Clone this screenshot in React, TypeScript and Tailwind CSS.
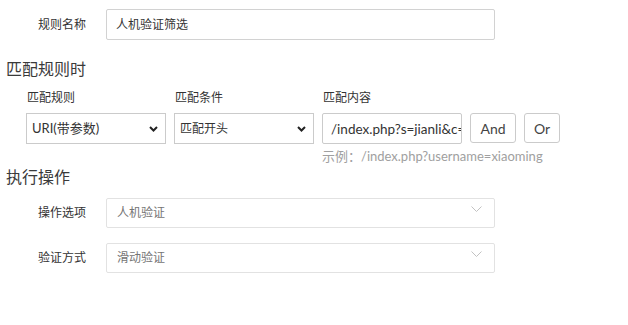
export default function App() {
  const font = { fontFamily: 'Lato, "Noto Sans CJK SC", sans-serif' };
  return (
    <div className="w-[628px] h-[325px] bg-white text-[#333]" style={font}>
      {/* 规则名称 */}
      <div className="flex items-center pt-[9px]">
        <div className="w-[86px] text-right text-[12px] text-[#333]">规则名称</div>
        <div className="ml-[20px] w-[389px] h-[31px] border border-[#d2d2d2] rounded-[2px] flex items-center pl-[9px] text-[12px]">
          人机验证筛选
        </div>
      </div>

      <div className="mt-[19px] pl-[6px] text-[16px] leading-[20px] text-[#3a3a3a]">匹配规则时</div>

      <div className="mt-[10px] pl-[26px] flex">
        <div className="w-[140px] mr-[8px]">
          <div className="pl-[1px] text-[12px] leading-[18px] mb-[6px]">匹配规则</div>
          <div className="h-[31px] border border-[#cbcbcb] flex items-center justify-between pl-[5px] pr-[7px] text-[13px]">
            <span>URI(带参数)</span>
            <svg width="9" height="6" viewBox="0 0 9 6"><path d="M1 1l3.5 3.5L8 1" fill="none" stroke="#222" strokeWidth="2" /></svg>
          </div>
        </div>
        <div className="w-[140px] mr-[8px]">
          <div className="pl-[1px] text-[12px] leading-[18px] mb-[6px]">匹配条件</div>
          <div className="h-[31px] border border-[#cbcbcb] flex items-center justify-between pl-[5px] pr-[7px] text-[12px]">
            <span>匹配开头</span>
            <svg width="9" height="6" viewBox="0 0 9 6"><path d="M1 1l3.5 3.5L8 1" fill="none" stroke="#222" strokeWidth="2" /></svg>
          </div>
        </div>
        <div>
          <div className="pl-[1px] text-[12px] leading-[18px] mb-[6px]">匹配内容</div>
          <div className="flex">
            <input
              readOnly
              value="/index.php?s=jianli&c=index&a="
              className="w-[140px] h-[31px] border border-[#cbcbcb] rounded-[2px] pl-[8px] text-[13.5px] text-[#333] outline-none"
              style={font}
            />
            <div className="ml-[8px] w-[46px] h-[30px] border border-[#cbcbcb] rounded-[3px] flex items-center justify-center text-[14px] text-[#444]">And</div>
            <div className="ml-[8px] w-[36px] h-[30px] border border-[#cbcbcb] rounded-[3px] flex items-center justify-center text-[14px] text-[#444]">Or</div>
          </div>
          <div className="mt-[4px] text-[13px] leading-[16px] text-[#a0a0a0] whitespace-nowrap">示例：/index.php?username=xiaoming</div>
        </div>
      </div>

      <div className="mt-[3px] pl-[6px] text-[16px] leading-[20px] text-[#3a3a3a]">执行操作</div>

      <div className="mt-[11px] flex items-center">
        <div className="w-[86px] text-right text-[12px]">操作选项</div>
        <div className="ml-[20px] w-[389px] h-[30px] border border-[#e2e2e2] rounded-[2px] flex items-center justify-between pl-[10px] pr-[12px] text-[12px] text-[#757575]">
          <span>人机验证</span>
          <svg width="11" height="6" viewBox="0 0 11 6" className="-mt-[9px]"><path d="M0.5 0.5l5 5 5-5" fill="none" stroke="#c2c2c2" strokeWidth="1" /></svg>
        </div>
      </div>
      <div className="mt-[15px] flex items-center">
        <div className="w-[86px] text-right text-[12px]">验证方式</div>
        <div className="ml-[20px] w-[389px] h-[30px] border border-[#e2e2e2] rounded-[2px] flex items-center justify-between pl-[10px] pr-[12px] text-[12px] text-[#757575]">
          <span>滑动验证</span>
          <svg width="11" height="6" viewBox="0 0 11 6" className="-mt-[9px]"><path d="M0.5 0.5l5 5 5-5" fill="none" stroke="#c2c2c2" strokeWidth="1" /></svg>
        </div>
      </div>
    </div>
  );
}
